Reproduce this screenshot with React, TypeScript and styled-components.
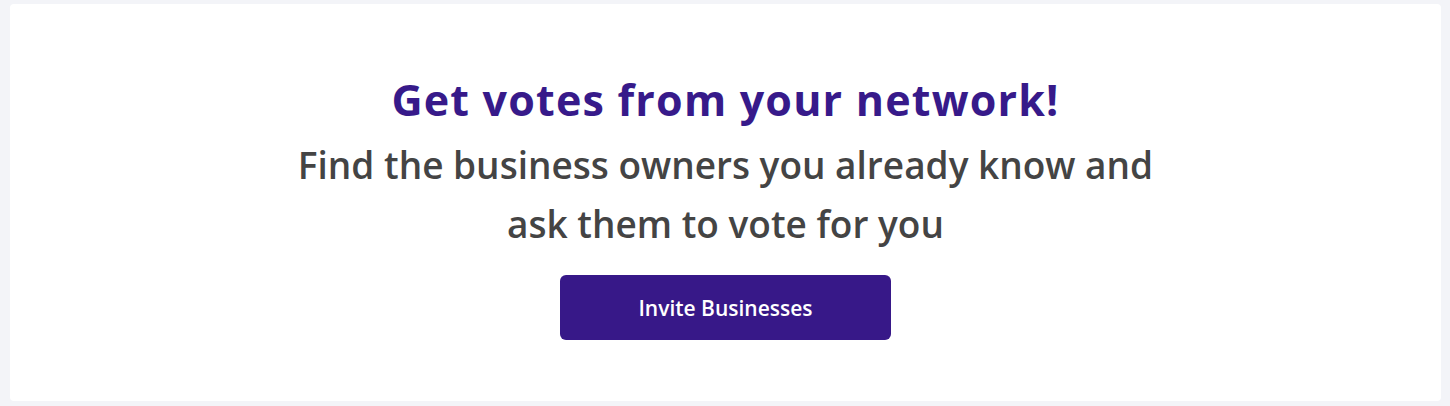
import styled, { createGlobalStyle } from "styled-components";

const GlobalStyle = createGlobalStyle`
  html, body {
    margin: 0;
    padding: 0;
    background: #f3f4f8;
  }
  body {
    font-family: "Open Sans", "Liberation Sans", sans-serif;
  }
`;

const Page = styled.div`
  padding: 4px 9px 5px 10px;
`;

const Card = styled.section`
  height: 397px;
  box-sizing: border-box;
  background: #ffffff;
  border-radius: 4px;
  display: flex;
  flex-direction: column;
  align-items: center;
  padding-top: 68px;
`;

const Title = styled.h1`
  margin: 0;
  font-size: 43px;
  line-height: 56px;
  font-weight: 700;
  letter-spacing: 1.2px;
  color: #371a8a;
`;

const Subtitle = styled.p`
  margin: 7px 0 0;
  font-size: 37px;
  line-height: 59px;
  font-weight: 600;
  color: #444444;
  text-align: center;
`;

const InviteButton = styled.button`
  margin-top: 22px;
  width: 331px;
  height: 65px;
  border: none;
  border-radius: 6px;
  background: #371888;
  color: #ffffff;
  font-family: "Open Sans", "Liberation Sans", sans-serif;
  font-size: 21px;
  font-weight: 600;
  cursor: pointer;
`;

const App = () => {
  return (
    <>
      <GlobalStyle />
      <Page>
        <Card>
          <Title>Get votes from your network!</Title>
          <Subtitle>
            Find the business owners you already know and
            <br />
            ask them to vote for you
          </Subtitle>
          <InviteButton>Invite Businesses</InviteButton>
        </Card>
      </Page>
    </>
  );
};

export default App;
